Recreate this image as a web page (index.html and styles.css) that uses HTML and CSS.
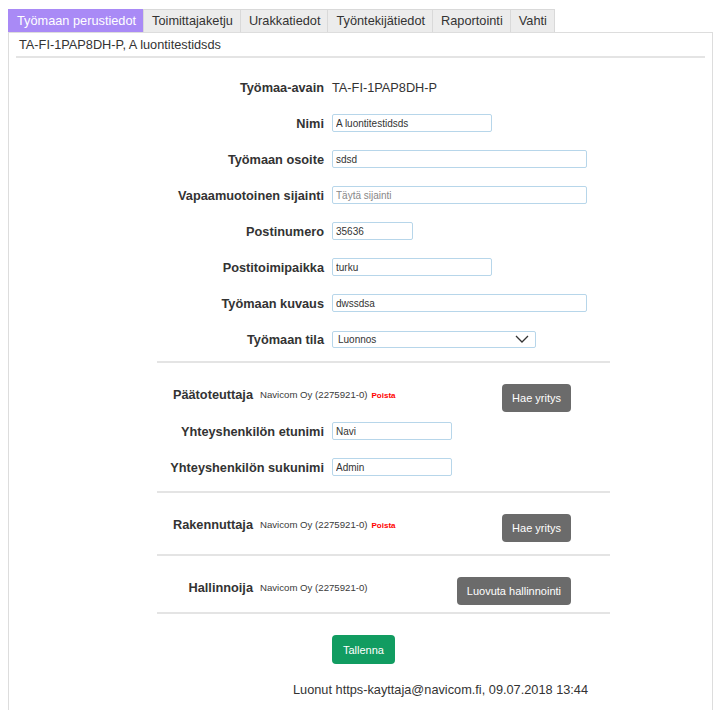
FILE: index.html
```html
<!DOCTYPE html>
<html lang="fi">
<head>
<meta charset="utf-8">
<title>Työmaan perustiedot</title>
<link rel="stylesheet" href="styles.css">
</head>
<body>
<ul class="tabs">
  <li class="tab active">Työmaan perustiedot</li>
  <li class="tab">Toimittajaketju</li>
  <li class="tab">Urakkatiedot</li>
  <li class="tab">Työntekijätiedot</li>
  <li class="tab">Raportointi</li>
  <li class="tab">Vahti</li>
</ul>
<div class="panel">
  <div class="panel-title">TA-FI-1PAP8DH-P, A luontitestidsds</div>

  <div class="form">
    <div class="fields">
      <div class="row"><label class="lbl">Työmaa-avain</label><span class="value">TA-FI-1PAP8DH-P</span></div>
      <div class="row"><label class="lbl">Nimi</label><input class="inp w160" value="A luontitestidsds"></div>
      <div class="row"><label class="lbl">Työmaan osoite</label><input class="inp w255" value="sdsd"></div>
      <div class="row"><label class="lbl">Vapaamuotoinen sijainti</label><input class="inp w255" placeholder="Täytä sijainti"></div>
      <div class="row"><label class="lbl">Postinumero</label><input class="inp w80" value="35636"></div>
      <div class="row"><label class="lbl">Postitoimipaikka</label><input class="inp w160" value="turku"></div>
      <div class="row"><label class="lbl">Työmaan kuvaus</label><input class="inp w255" value="dwssdsa"></div>
      <div class="row"><label class="lbl">Työmaan tila</label>
        <div class="select">
          <span class="select-text">Luonnos</span>
          <svg class="chev" width="14" height="8" viewBox="0 0 14 8"><path d="M1 1 L7 7 L13 1" fill="none" stroke="#333" stroke-width="1.3"/></svg>
        </div>
      </div>
    </div>

    <div class="section first">
      <div class="sec-head">
        <span class="sec-lbl">Päätoteuttaja</span>
        <span class="company">Navicom Oy (2275921-0)</span>
        <span class="remove">Poista</span>
        <button class="btn btn-gray">Hae yritys</button>
      </div>
      <div class="contacts">
        <div class="crow"><label class="lbl">Yhteyshenkilön etunimi</label><input class="inp w120" value="Navi"></div>
        <div class="crow"><label class="lbl">Yhteyshenkilön sukunimi</label><input class="inp w120" value="Admin"></div>
      </div>
    </div>

    <div class="section">
      <div class="sec-head">
        <span class="sec-lbl">Rakennuttaja</span>
        <span class="company">Navicom Oy (2275921-0)</span>
        <span class="remove">Poista</span>
        <button class="btn btn-gray">Hae yritys</button>
      </div>
    </div>

    <div class="section last">
      <div class="sec-head">
        <span class="sec-lbl">Hallinnoija</span>
        <span class="company">Navicom Oy (2275921-0)</span>
        <button class="btn btn-gray">Luovuta hallinnointi</button>
      </div>
    </div>

    <div class="actions">
      <button class="btn btn-green">Tallenna</button>
    </div>
  </div>

  <div class="created">Luonut https-kayttaja@navicom.fi, 09.07.2018 13:44</div>
</div>
</body>
</html>
```
FILE: styles.css
```css
html, body {
  margin: 0;
  padding: 0;
}
body {
  padding: 9px 8px 0 8px;
  font-family: "Liberation Sans", Arial, sans-serif;
  color: #333;
  font-size: 12.75px;
  background: #fff;
  overflow: hidden;
  height: 701px;
}

/* tab strip */
.tabs {
  list-style: none;
  margin: 0;
  padding: 0 0 0 1px;
  display: flex;
}
.tab {
  height: 22px;
  line-height: 22px;
  padding: 0 7px 0 8px;
  background: #ececec;
  border: 1px solid #d9d9d9;
  border-bottom: 0;
  margin-left: -1px;
  font-size: 12.75px;
  color: #333;
}
.tab.active {
  background: #a98af6;
  border-color: #a98af6;
  color: #fff;
}

/* content panel */
.panel {
  border: 1px solid #ddd;
  border-bottom: 0;
  width: 703px;
  height: 680px;
}
.panel-title {
  margin: 0 7px 0 7px;
  padding: 4px 3px 0;
  height: 19px;
  border-bottom: 2px solid #e4e4e4;
  font-size: 12.75px;
}

.form {
  margin-left: 148px;
  width: 453px;
  padding-top: 11px;
}

.row {
  display: flex;
  align-items: center;
  height: 36px;
}
.lbl {
  width: 167px;
  text-align: right;
  font-weight: bold;
  font-size: 12.75px;
  margin-right: 8px;
  flex: none;
}
.value {
  font-size: 12.75px;
}
.inp {
  height: 18px;
  box-sizing: border-box;
  border: 1px solid #b7d6ea;
  border-radius: 2px;
  padding: 0 3px;
  font-family: "Liberation Sans", Arial, sans-serif;
  font-size: 10px;
  color: #333;
  outline: none;
}
.inp::placeholder { color: #888; }
.w80 { width: 81px; }
.w120 { width: 120px; }
.w160 { width: 160px; }
.w255 { width: 255px; }

.select {
  width: 204px;
  height: 17px;
  box-sizing: border-box;
  border: 1px solid #b7d6ea;
  border-radius: 2px;
  display: flex;
  align-items: center;
  justify-content: space-between;
  padding: 0 6px 0 5px;
  font-size: 10px;
}
.chev { display: block; }

/* company sections */
.section {
  border-top: 2px solid #e4e4e4;
  padding: 21px 39px 12px 0;
}
.section.first {
  margin-top: 4px;
  padding-bottom: 6px;
}
.section.last {
  border-bottom: 2px solid #e4e4e4;
  padding-bottom: 7px;
}
.sec-head {
  display: flex;
  align-items: flex-start;
}
.sec-lbl {
  width: 96px;
  text-align: right;
  font-weight: bold;
  font-size: 12.75px;
  margin-top: 3px;
  flex: none;
}
.company {
  font-size: 9.65px;
  color: #3a3a3a;
  margin-left: 7px;
  margin-top: 5px;
}
.remove {
  color: #f00;
  font-weight: bold;
  font-size: 8px;
  margin-left: 4px;
  margin-top: 7px;
}
.btn {
  border: 0;
  border-radius: 4px;
  color: #fff;
  font-family: "Liberation Sans", Arial, sans-serif;
  font-size: 11px;
  height: 28px;
  padding: 0 10px;
}
.btn-gray {
  background: #6b6b6b;
  margin-left: auto;
}
.contacts {
  padding-top: 1px;
}
.crow {
  display: flex;
  align-items: center;
  height: 36px;
}

.actions {
  padding: 21px 0 0 175px;
}
.btn-green {
  background: #119c61;
  height: 29px;
  padding: 0 11px;
}

.created {
  margin: 18px 0 0 284px;
  font-size: 12.75px;
}
```
